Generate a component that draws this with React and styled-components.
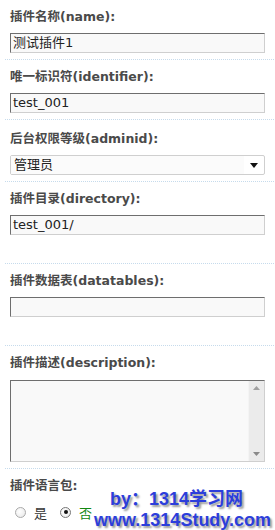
import React from "react";
import styled, { createGlobalStyle } from "styled-components";

const Global = createGlobalStyle`
  html, body {
    margin: 0;
    padding: 0;
    background: #ffffff;
  }
  body {
    font-family: "DejaVu Sans", "Noto Sans CJK SC", sans-serif;
  }
`;

const Page = styled.div`
  position: relative;
  width: 269px;
  height: 530px;
  padding-left: 5px;
  overflow: hidden;
`;

const Row = styled.div`
  padding: ${(p) => p.$top || 8}px 0 ${(p) => p.$bottom || 6}px 5px;
  border-bottom: 1px dotted #c6dbec;
`;

const Label = styled.div`
  font-size: 12.5px;
  font-weight: bold;
  line-height: 18px;
  color: #4a4a4a;
  margin-bottom: ${(p) => p.$gap || 7}px;
`;

const TextInput = styled.div`
  box-sizing: border-box;
  width: 255px;
  height: 20px;
  border-style: solid;
  border-width: 1px;
  border-color: #6e6e6e #cfcfcf #cfcfcf #6e6e6e;
  background: #f9f9f9;
  font-size: 13px;
  line-height: 18px;
  color: #222;
  padding-left: 2px;
  white-space: nowrap;
  overflow: hidden;
`;

const SelectBox = styled.div`
  box-sizing: border-box;
  width: 255px;
  height: 20px;
  border: 1px solid #cfcfcf;
  border-radius: 2px;
  background: #ffffff;
  display: flex;
  align-items: center;
  font-size: 13px;
  color: #222;
`;

const SelectText = styled.div`
  flex: 1;
  height: 18px;
  line-height: 18px;
  padding-left: 3px;
  background: #fbfbfb;
`;

const SelectArrow = styled.div`
  width: 20px;
  display: flex;
  justify-content: center;
  align-items: center;
`;

const TextArea = styled.div`
  box-sizing: border-box;
  width: 255px;
  height: 82px;
  border-style: solid;
  border-width: 1px;
  border-color: #6e6e6e #cfcfcf #cfcfcf #6e6e6e;
  background: #f9f9f9;
  display: flex;
  justify-content: flex-end;
`;

const ScrollBar = styled.div`
  width: 16px;
  height: 100%;
  background: #ebebeb;
  border-left: 1px solid #f4f4f4;
  display: flex;
  flex-direction: column;
  justify-content: space-between;
  align-items: center;
  padding: 5px 0;
  box-sizing: border-box;
`;

const Radios = styled.div`
  display: flex;
  align-items: center;
  padding-left: 5px;
  height: 18px;
`;

const RadioItem = styled.label`
  display: flex;
  align-items: center;
  margin-right: 13px;
  font-size: 13px;
  color: ${(p) => (p.$green ? "#118811" : "#333")};
  font-family: "Noto Sans CJK SC", sans-serif;
`;

const Circle = styled.span`
  box-sizing: border-box;
  width: 11px;
  height: 11px;
  border-radius: 50%;
  border: 1px solid ${(p) => (p.$on ? "#777" : "#aaa")};
  background: radial-gradient(circle at 40% 40%, #ffffff, #e6e6e6);
  margin-right: 8px;
  display: flex;
  align-items: center;
  justify-content: center;
  &::after {
    content: "";
    display: ${(p) => (p.$on ? "block" : "none")};
    width: 4px;
    height: 4px;
    border-radius: 50%;
    background: #111;
  }
`;

const Watermark = styled.div`
  position: absolute;
  left: 94px;
  top: 489px;
  font-family: "Liberation Sans", "Noto Sans CJK SC", sans-serif;
  font-weight: bold;
  font-size: 18px;
  line-height: 21px;
  color: #2c3edb;
  text-shadow: 2px 2px 2px #9a9a9a;
  white-space: nowrap;
`;

const MarkLine = styled.div`
  padding-left: ${(p) => p.$indent || 0}px;
`;

const Triangle = ({ up, color = "#111", w = 8, h = 4 }) => (
  <svg width={w} height={h} viewBox={`0 0 ${w} ${h}`}>
    <polygon
      points={up ? `0,${h} ${w},${h} ${w / 2},0` : `0,0 ${w},0 ${w / 2},${h}`}
      fill={color}
    />
  </svg>
);

export default function App() {
  return (
    <Page>
      <Global />
      <Row>
        <Label>插件名称(name):</Label>
        <TextInput>测试插件1</TextInput>
      </Row>
      <Row>
        <Label>唯一标识符(identifier):</Label>
        <TextInput>test_001</TextInput>
      </Row>
      <Row $top={10} $bottom={6}>
        <Label>后台权限等级(adminid):</Label>
        <SelectBox>
          <SelectText>管理员</SelectText>
          <SelectArrow>
            <Triangle w={8} h={5} />
          </SelectArrow>
        </SelectBox>
      </Row>
      <Row $bottom={28}>
        <Label>插件目录(directory):</Label>
        <TextInput>test_001/</TextInput>
      </Row>
      <Row $bottom={28}>
        <Label>插件数据表(datatables):</Label>
        <TextInput />
      </Row>
      <Row>
        <Label $gap={8}>插件描述(description):</Label>
        <TextArea>
          <ScrollBar>
            <Triangle up color="#a0a0a0" w={7} h={4} />
            <Triangle color="#8a8a8a" w={7} h={4} />
          </ScrollBar>
        </TextArea>
      </Row>
      <Row $bottom={10}>
        <Label $gap={8}>插件语言包:</Label>
        <Radios>
          <RadioItem>
            <Circle />是
          </RadioItem>
          <RadioItem $green>
            <Circle $on />否
          </RadioItem>
        </Radios>
      </Row>
      <Watermark>
        <MarkLine $indent={16}>by：1314学习网</MarkLine>
        <MarkLine>www.1314Study.com</MarkLine>
      </Watermark>
    </Page>
  );
}
